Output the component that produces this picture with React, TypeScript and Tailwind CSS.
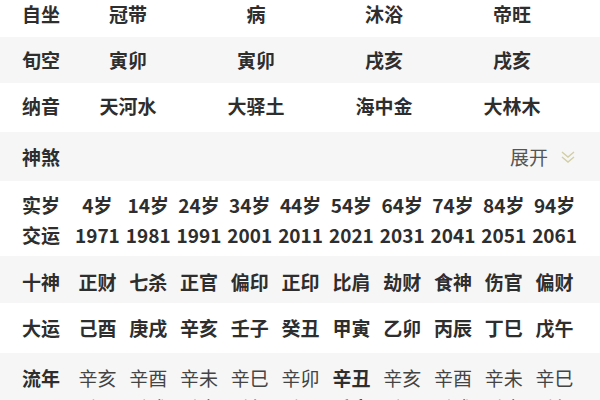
const font = { fontFamily: '"Noto Sans CJK SC", "Noto Sans", sans-serif' };

const zizuo = ["冠带", "病", "沐浴", "帝旺"];
const xunkong = ["寅卯", "寅卯", "戌亥", "戌亥"];
const nayin = ["天河水", "大驿土", "海中金", "大林木"];

const shisui = ["4岁", "14岁", "24岁", "34岁", "44岁", "54岁", "64岁", "74岁", "84岁", "94岁"];
const jiaoyun = ["1971", "1981", "1991", "2001", "2011", "2021", "2031", "2041", "2051", "2061"];
const shishen = ["正财", "七杀", "正官", "偏印", "正印", "比肩", "劫财", "食神", "伤官", "偏财"];
const dayun = ["己酉", "庚戌", "辛亥", "壬子", "癸丑", "甲寅", "乙卯", "丙辰", "丁巳", "戊午"];
const liunian1 = ["辛亥", "辛酉", "辛未", "辛巳", "辛卯", "辛丑", "辛亥", "辛酉", "辛未", "辛巳"];
const liunian2 = ["壬子", "壬戌", "壬申", "壬午", "壬辰", "壬寅", "壬子", "壬戌", "壬申", "壬午"];

const FourRow = ({ label, items, className }: { label: string; items: string[]; className: string }) => (
  <div className={`flex ${className}`}>
    <div className="w-[64px] pl-[22px] font-bold">{label}</div>
    <div className="grid grid-cols-4 w-[512px]">
      {items.map((t, i) => (
        <div key={i} className="text-center font-bold">
          {t}
        </div>
      ))}
    </div>
  </div>
);

const TenCells = ({ items, boldIdx, bold }: { items: string[]; boldIdx?: number; bold?: boolean }) => (
  <div className="grid grid-cols-10 w-[508px]">
    {items.map((t, i) => (
      <div
        key={i}
        className={`text-center whitespace-nowrap ${bold || i === boldIdx ? "font-bold" : "font-normal text-[#444]"}`}
      >
        {t}
      </div>
    ))}
  </div>
);

export default function App() {
  return (
    <div className="w-[600px] h-[400px] overflow-hidden bg-white text-[#2e2e2e] text-[19px] leading-[22px]" style={font}>
      <FourRow label="自坐" items={zizuo} className="h-[37px] pt-[3px]" />
      <FourRow label="旬空" items={xunkong} className="h-[46px] items-center bg-[#f6f6f6]" />
      <FourRow label="纳音" items={nayin} className="h-[49px] items-center pb-[4px]" />

      {/* 神煞 */}
      <div className="flex h-[49px] items-center justify-between bg-[#f6f6f6] pl-[22px] pr-[24px]">
        <div className="font-bold">神煞</div>
        <div className="flex items-center gap-[12px] text-[#555]">
          <span>展开</span>
          <svg width="16" height="14" viewBox="0 0 16 14" fill="none" stroke="#d2cea6" strokeWidth="1.4">
            <path d="M2 2 L8 7 L14 2" />
            <path d="M2 7 L8 12 L14 7" />
          </svg>
        </div>
      </div>

      {/* 实岁 / 交运 */}
      <div className="h-[75px] pt-[13px] flex flex-col gap-[8px]">
        <div className="flex">
          <div className="w-[72px] pl-[22px] font-bold">实岁</div>
          <TenCells items={shisui} bold />
        </div>
        <div className="flex">
          <div className="w-[72px] pl-[22px] font-bold">交运</div>
          <TenCells items={jiaoyun} bold />
        </div>
      </div>

      <div className="flex h-[47px] items-center bg-[#f6f6f6] pt-[4px]">
        <div className="w-[72px] pl-[22px] font-bold">十神</div>
        <TenCells items={shishen} bold />
      </div>

      <div className="flex h-[50px] items-center">
        <div className="w-[72px] pl-[22px] font-bold">大运</div>
        <TenCells items={dayun} bold />
      </div>

      <div className="bg-[#f6f6f6] pt-[14px] pb-[10px] flex flex-col gap-[8px]">
        <div className="flex">
          <div className="w-[72px] pl-[22px] font-bold">流年</div>
          <TenCells items={liunian1} boldIdx={5} />
        </div>
        <div className="flex">
          <div className="w-[72px]" />
          <TenCells items={liunian2} boldIdx={5} />
        </div>
      </div>
    </div>
  );
}
